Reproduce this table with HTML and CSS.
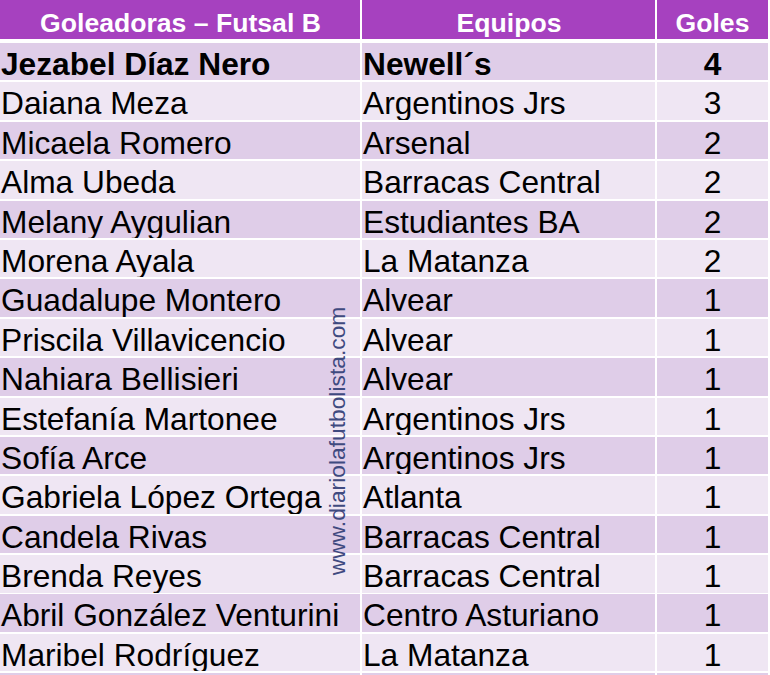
FILE: index.html
```html
<!DOCTYPE html>
<html lang="es">
<head>
<meta charset="utf-8">
<title>Goleadoras – Futsal B</title>
<link rel="stylesheet" href="styles.css">
</head>
<body>
<div class="sheet">
  <div class="table">
    <div class="row head"><div class="c name">Goleadoras – Futsal B</div><div class="c team">Equipos</div><div class="c goals">Goles</div></div>
    <div class="row dark bold"><div class="c name">Jezabel Díaz Nero</div><div class="c team">Newell´s</div><div class="c goals">4</div></div>
    <div class="row light"><div class="c name">Daiana Meza</div><div class="c team">Argentinos Jrs</div><div class="c goals">3</div></div>
    <div class="row dark"><div class="c name">Micaela Romero</div><div class="c team">Arsenal</div><div class="c goals">2</div></div>
    <div class="row light"><div class="c name">Alma Ubeda</div><div class="c team">Barracas Central</div><div class="c goals">2</div></div>
    <div class="row dark"><div class="c name">Melany Aygulian</div><div class="c team">Estudiantes BA</div><div class="c goals">2</div></div>
    <div class="row light"><div class="c name">Morena Ayala</div><div class="c team">La Matanza</div><div class="c goals">2</div></div>
    <div class="row dark"><div class="c name">Guadalupe Montero</div><div class="c team">Alvear</div><div class="c goals">1</div></div>
    <div class="row light"><div class="c name">Priscila Villavicencio</div><div class="c team">Alvear</div><div class="c goals">1</div></div>
    <div class="row dark"><div class="c name">Nahiara Bellisieri</div><div class="c team">Alvear</div><div class="c goals">1</div></div>
    <div class="row light"><div class="c name">Estefanía Martonee</div><div class="c team">Argentinos Jrs</div><div class="c goals">1</div></div>
    <div class="row dark"><div class="c name">Sofía Arce</div><div class="c team">Argentinos Jrs</div><div class="c goals">1</div></div>
    <div class="row light"><div class="c name">Gabriela López Ortega</div><div class="c team">Atlanta</div><div class="c goals">1</div></div>
    <div class="row dark"><div class="c name">Candela Rivas</div><div class="c team">Barracas Central</div><div class="c goals">1</div></div>
    <div class="row light"><div class="c name">Brenda Reyes</div><div class="c team">Barracas Central</div><div class="c goals">1</div></div>
    <div class="row dark"><div class="c name">Abril González Venturini</div><div class="c team">Centro Asturiano</div><div class="c goals">1</div></div>
    <div class="row light"><div class="c name">Maribel Rodríguez</div><div class="c team">La Matanza</div><div class="c goals">1</div></div>
    <div class="row dark"><div class="c name">&nbsp;</div><div class="c team">&nbsp;</div><div class="c goals">&nbsp;</div></div>
  </div>
  <div class="watermark">www.diariolafutbolista.com</div>
</div>
</body>
</html>
```

FILE: styles.css
```css
html, body {
  margin: 0;
  padding: 0;
  background: #ffffff;
  overflow: hidden;
}
.sheet {
  position: relative;
  width: 770px;
  height: 675px;
  overflow: hidden;
  font-family: "Liberation Sans", Arial, sans-serif;
}
.table {
  width: 768px;
  display: flex;
  flex-direction: column;
  gap: 1.9px;
}
.row {
  display: grid;
  grid-template-columns: 360px 293px 111px;
  column-gap: 2px;
}
.c {
  white-space: nowrap;
  overflow: hidden;
}
.head {
  margin-bottom: 2.1px;
}
.head .c {
  background: #a641bf;
  color: #ffffff;
  font-weight: bold;
  font-size: 26.6px;
  height: 39px;
  box-sizing: border-box;
  padding-top: 8px;
  line-height: 31px;
  text-align: center;
}
.row:not(.head) .c {
  font-size: 31.7px;
  color: #000000;
  height: 37.5px;
  box-sizing: border-box;
  padding-top: 5px;
  line-height: 32.5px;
}
.dark .c { background: #dfcde8; }
.light .c { background: #efe6f3; }
.row .name { padding-left: 1px; }
.row .team { padding-left: 1px; }
.row .goals { text-align: center; }
.bold .c { font-weight: bold; }
.watermark {
  position: absolute;
  left: 337px;
  top: 441px;
  transform: translate(-50%, -50%) rotate(-90deg);
  font-size: 22.8px;
  color: #3f4a80;
  white-space: nowrap;
  line-height: 1;
}
```
